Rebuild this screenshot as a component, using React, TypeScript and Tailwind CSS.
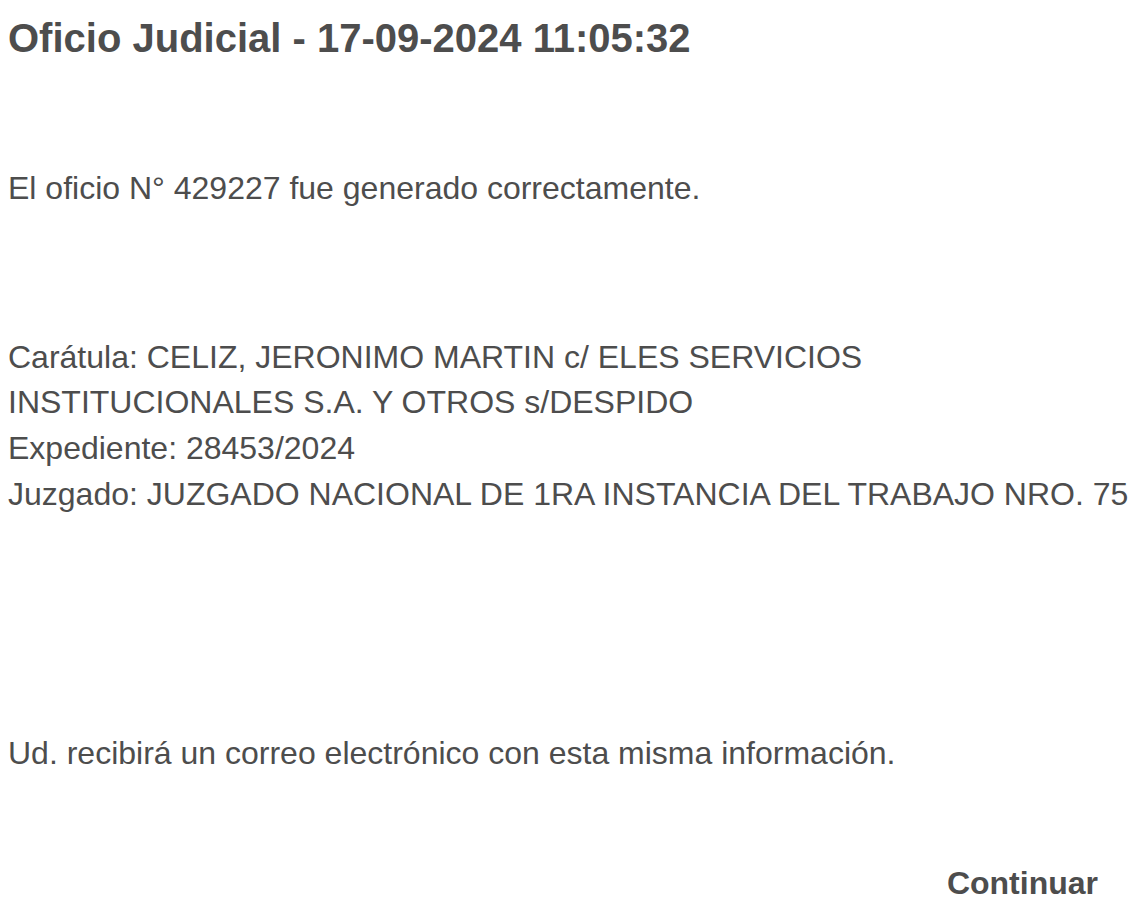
export default function App() {
  return (
    <div className="min-h-screen bg-white px-2 pt-[15px] text-[#4d4d4d] font-['Liberation_Sans',Arial,sans-serif]">
      <h1 className="text-[40px] font-bold leading-[46px]">Oficio Judicial - 17-09-2024 11:05:32</h1>

      <p className="mt-[105px] text-[32px] leading-[45.7px]">El oficio N° 429227 fue generado correctamente.</p>

      <div className="mt-[123px] text-[32px] leading-[45.7px]">
        <p>Carátula: CELIZ, JERONIMO MARTIN c/ ELES SERVICIOS INSTITUCIONALES S.A. Y OTROS s/DESPIDO</p>
        <p>Expediente: 28453/2024</p>
        <p>Juzgado: JUZGADO NACIONAL DE 1RA INSTANCIA DEL TRABAJO NRO. 75</p>
      </div>

      <p className="mt-[213px] text-[32px] leading-[45.7px]">Ud. recibirá un correo electrónico con esta misma información.</p>

      <div className="mt-[85px] flex justify-end pr-[39px]">
        <button className="text-[32px] font-bold leading-[45.7px] text-[#4d4d4d]">Continuar</button>
      </div>
    </div>
  )
}
